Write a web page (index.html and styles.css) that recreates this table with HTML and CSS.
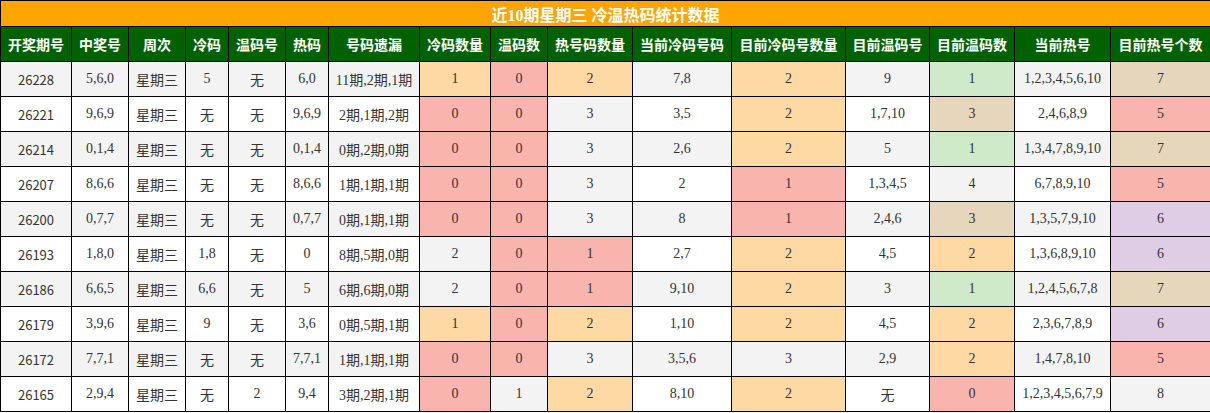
FILE: index.html
```html
<!DOCTYPE html>
<html lang="zh">
<head>
<meta charset="utf-8">
<title>近10期星期三 冷温热码统计数据</title>
<link rel="stylesheet" href="styles.css">
</head>
<body>
<table class="stats">
  <colgroup>
    <col style="width:71px"><col style="width:57px"><col style="width:57px"><col style="width:43px">
    <col style="width:57px"><col style="width:43px"><col style="width:91px"><col style="width:71px">
    <col style="width:57px"><col style="width:85px"><col style="width:99px"><col style="width:114px">
    <col style="width:84px"><col style="width:85px"><col style="width:96px"><col style="width:100px">
  </colgroup>
  <thead>
    <tr class="title-row"><th colspan="16">近10期星期三 冷温热码统计数据</th></tr>
    <tr class="head-row">
      <th>开奖期号</th><th>中奖号</th><th>周次</th><th>冷码</th><th>温码号</th><th>热码</th><th>号码遗漏</th>
      <th>冷码数量</th><th>温码数</th><th>热号码数量</th><th>当前冷码号码</th><th>目前冷码号数量</th>
      <th>目前温码号</th><th>目前温码数</th><th>当前热号</th><th>目前热号个数</th>
    </tr>
  </thead>
  <tbody>
    <tr class="odd">
      <td class="issue">26228</td><td>5,6,0</td><td class="cjk">星期三</td><td>5</td><td class="cjk">无</td><td>6,0</td><td>11期,2期,1期</td>
      <td class="peach">1</td><td class="pink">0</td><td class="peach">2</td><td>7,8</td><td class="peach">2</td>
      <td>9</td><td class="green">1</td><td>1,2,3,4,5,6,10</td><td class="tan">7</td>
    </tr>
    <tr>
      <td class="issue">26221</td><td>9,6,9</td><td class="cjk">星期三</td><td class="cjk">无</td><td class="cjk">无</td><td>9,6,9</td><td>2期,1期,2期</td>
      <td class="pink">0</td><td class="pink">0</td><td class="gray">3</td><td>3,5</td><td class="peach">2</td>
      <td>1,7,10</td><td class="tan">3</td><td>2,4,6,8,9</td><td class="pink">5</td>
    </tr>
    <tr class="odd">
      <td class="issue">26214</td><td>0,1,4</td><td class="cjk">星期三</td><td class="cjk">无</td><td class="cjk">无</td><td>0,1,4</td><td>0期,2期,0期</td>
      <td class="pink">0</td><td class="pink">0</td><td class="gray">3</td><td>2,6</td><td class="peach">2</td>
      <td>5</td><td class="green">1</td><td>1,3,4,7,8,9,10</td><td class="tan">7</td>
    </tr>
    <tr>
      <td class="issue">26207</td><td>8,6,6</td><td class="cjk">星期三</td><td class="cjk">无</td><td class="cjk">无</td><td>8,6,6</td><td>1期,1期,1期</td>
      <td class="pink">0</td><td class="pink">0</td><td class="gray">3</td><td>2</td><td class="pink">1</td>
      <td>1,3,4,5</td><td class="gray">4</td><td>6,7,8,9,10</td><td class="pink">5</td>
    </tr>
    <tr class="odd">
      <td class="issue">26200</td><td>0,7,7</td><td class="cjk">星期三</td><td class="cjk">无</td><td class="cjk">无</td><td>0,7,7</td><td>0期,1期,1期</td>
      <td class="pink">0</td><td class="pink">0</td><td class="gray">3</td><td>8</td><td class="pink">1</td>
      <td>2,4,6</td><td class="tan">3</td><td>1,3,5,7,9,10</td><td class="lavender">6</td>
    </tr>
    <tr>
      <td class="issue">26193</td><td>1,8,0</td><td class="cjk">星期三</td><td>1,8</td><td class="cjk">无</td><td>0</td><td>8期,5期,0期</td>
      <td class="gray">2</td><td class="pink">0</td><td class="pink">1</td><td>2,7</td><td class="peach">2</td>
      <td>4,5</td><td class="peach">2</td><td>1,3,6,8,9,10</td><td class="lavender">6</td>
    </tr>
    <tr class="odd">
      <td class="issue">26186</td><td>6,6,5</td><td class="cjk">星期三</td><td>6,6</td><td class="cjk">无</td><td>5</td><td>6期,6期,0期</td>
      <td class="gray">2</td><td class="pink">0</td><td class="pink">1</td><td>9,10</td><td class="peach">2</td>
      <td>3</td><td class="green">1</td><td>1,2,4,5,6,7,8</td><td class="tan">7</td>
    </tr>
    <tr>
      <td class="issue">26179</td><td>3,9,6</td><td class="cjk">星期三</td><td>9</td><td class="cjk">无</td><td>3,6</td><td>0期,5期,1期</td>
      <td class="peach">1</td><td class="pink">0</td><td class="peach">2</td><td>1,10</td><td class="peach">2</td>
      <td>4,5</td><td class="peach">2</td><td>2,3,6,7,8,9</td><td class="lavender">6</td>
    </tr>
    <tr class="odd">
      <td class="issue">26172</td><td>7,7,1</td><td class="cjk">星期三</td><td class="cjk">无</td><td class="cjk">无</td><td>7,7,1</td><td>1期,1期,1期</td>
      <td class="pink">0</td><td class="pink">0</td><td class="gray">3</td><td>3,5,6</td><td class="gray">3</td>
      <td>2,9</td><td class="peach">2</td><td>1,4,7,8,10</td><td class="pink">5</td>
    </tr>
    <tr>
      <td class="issue">26165</td><td>2,9,4</td><td class="cjk">星期三</td><td class="cjk">无</td><td>2</td><td>9,4</td><td>3期,2期,1期</td>
      <td class="pink">0</td><td class="gray">1</td><td class="peach">2</td><td>8,10</td><td class="peach">2</td>
      <td class="cjk">无</td><td class="pink">0</td><td>1,2,3,4,5,6,7,9</td><td class="gray">8</td>
    </tr>
  </tbody>
</table>
</body>
</html>
```
FILE: styles.css
```css
html, body {
  margin: 0;
  padding: 0;
  background: #ffffff;
}

.stats {
  border-collapse: collapse;
  table-layout: fixed;
  width: 1210px;
  font-family: "Liberation Serif", "Noto Sans CJK SC", serif;
  font-size: 14px;
  color: #333333;
}

.stats th,
.stats td {
  border: 1px solid #000000;
  text-align: center;
  vertical-align: middle;
  padding: 0;
  white-space: nowrap;
  overflow: hidden;
}

.title-row th {
  background: #ffa500;
  color: #ffffff;
  font-size: 16px;
  font-weight: bold;
  height: 25px;
}

.head-row th {
  background: #006100;
  color: #ffffff;
  font-size: 14px;
  font-weight: bold;
  font-family: "Noto Sans CJK SC", sans-serif;
  height: 34px;
}

.stats td {
  height: 34px;
  background: #ffffff;
}

.stats tr.odd td {
  background: #f3f3f3;
}

.stats td.issue {
  font-family: "Noto Sans CJK SC", sans-serif;
  font-size: 13px;
}

.stats td.cjk {
  font-family: "Noto Sans CJK SC", sans-serif;
  font-size: 14px;
}

.stats tr td.peach { background: #ffd9a4; }
.stats tr td.pink { background: #fab4ae; }
.stats tr td.gray { background: #f3f3f3; }
.stats tr td.green { background: #ceeac8; }
.stats tr td.tan { background: #e6d7bc; }
.stats tr td.lavender { background: #dfcde5; }
```
